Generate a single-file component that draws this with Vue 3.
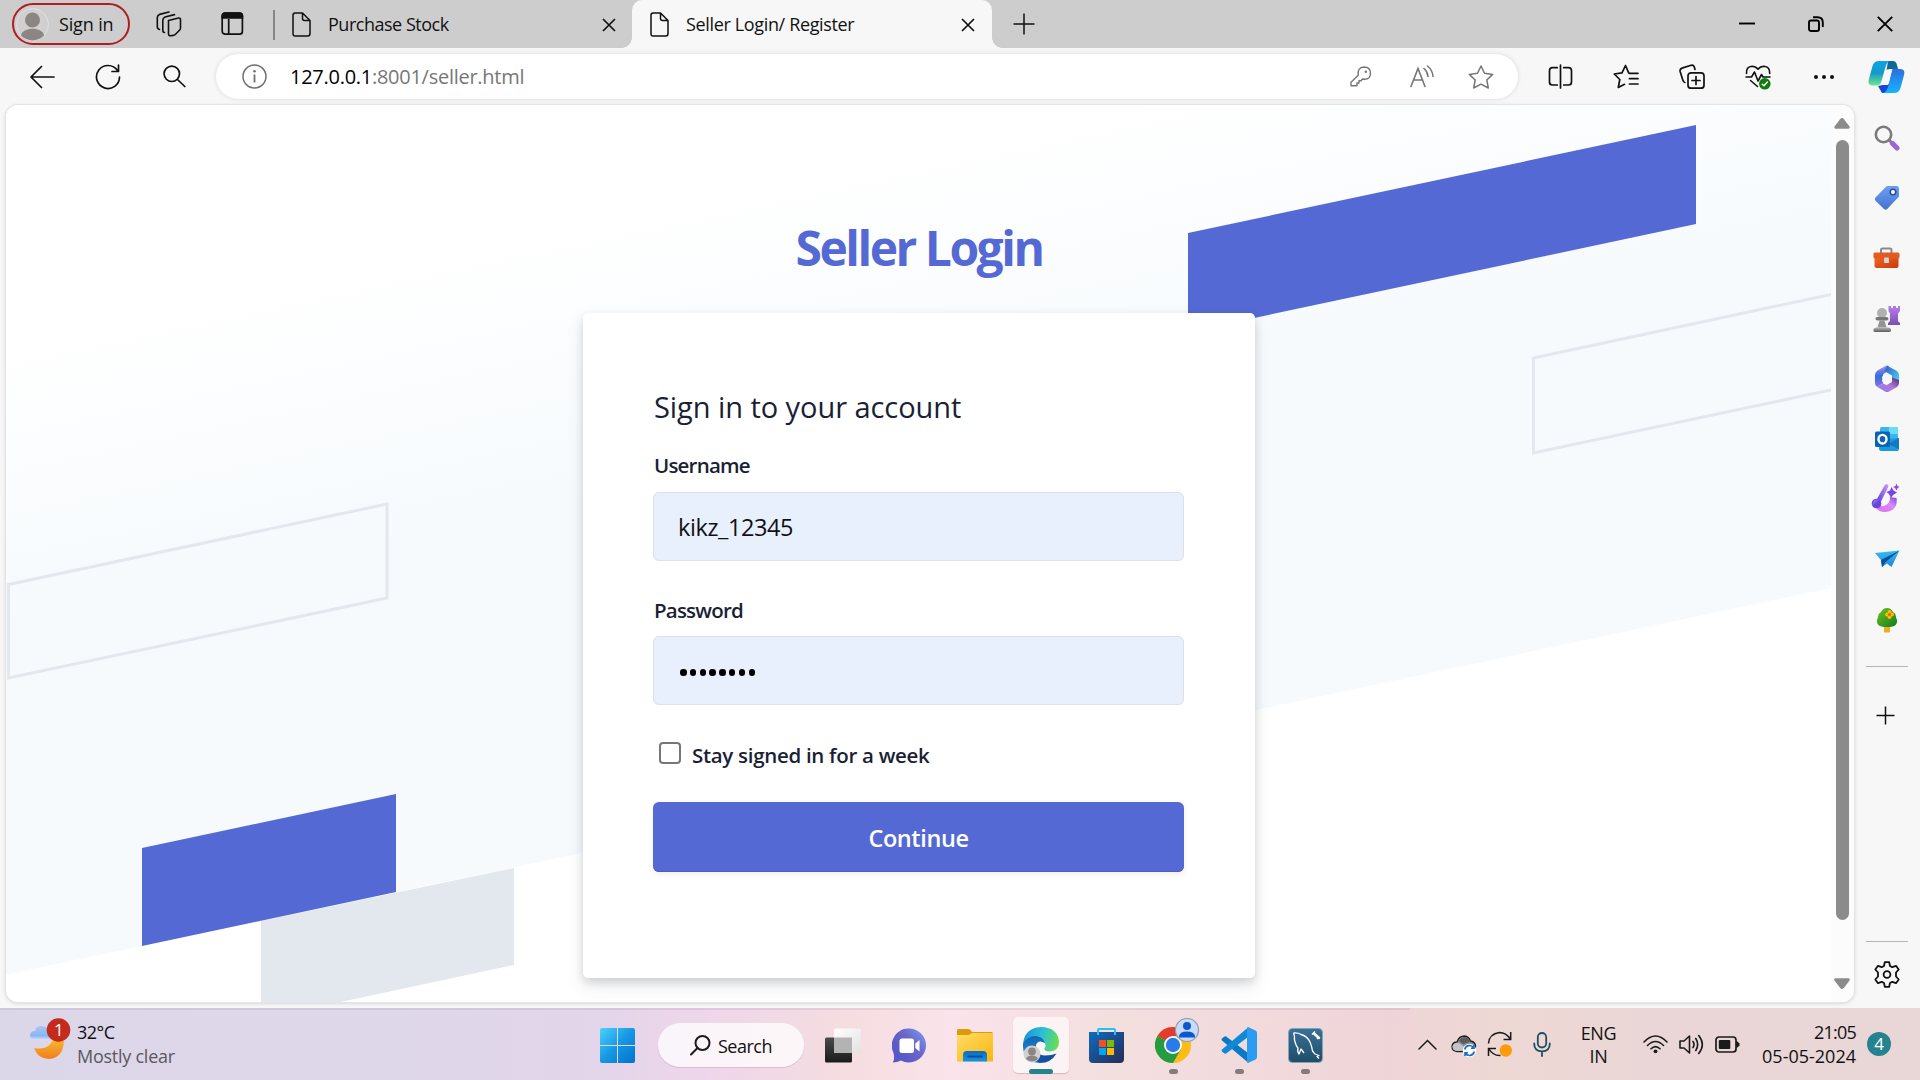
<script setup>
import { ref } from 'vue'

const username = ref('kikz_12345')
const password = ref('password')
const stay = ref(false)
</script>

<template>
  <div class="screen">
    <svg class="defs" width="0" height="0" aria-hidden="true">
      <defs>
        <linearGradient id="gCop1" x1="0" y1="0" x2="0" y2="1"><stop offset="0" stop-color="#0ba5e6" /><stop offset=".5" stop-color="#1499c9" /><stop offset="1" stop-color="#6fe58c" /></linearGradient>
        <linearGradient id="gCop2" x1="0" y1="0" x2="0" y2="1"><stop offset="0" stop-color="#2a6fe0" /><stop offset="1" stop-color="#16b4ff" /></linearGradient>
        <linearGradient id="gTag" x1="0" y1="0" x2="0" y2="1"><stop offset="0" stop-color="#6aa0f5" /><stop offset="1" stop-color="#4673cf" /></linearGradient>
        <linearGradient id="gBag" x1="0" y1="0" x2="1" y2="1"><stop offset="0" stop-color="#f0652a" /><stop offset="1" stop-color="#c93a06" /></linearGradient>
        <linearGradient id="gGray" x1="0" y1="0" x2="0" y2="1"><stop offset="0" stop-color="#b5b5b5" /><stop offset="1" stop-color="#5c5c5c" /></linearGradient>
        <linearGradient id="gRook" x1="0" y1="0" x2="0" y2="1"><stop offset="0" stop-color="#b77df0" /><stop offset="1" stop-color="#7c4fae" /></linearGradient>
        <linearGradient id="gM1" x1="0" y1="0" x2="0" y2="1"><stop offset="0" stop-color="#b48df0" /><stop offset=".5" stop-color="#2f6fd8" /><stop offset="1" stop-color="#8a6fe8" /></linearGradient>
        <linearGradient id="gM2" x1="0" y1="0" x2="1" y2="1"><stop offset="0" stop-color="#3059c8" /><stop offset="1" stop-color="#4adcf8" /></linearGradient>
        <linearGradient id="gM3" x1="0" y1="1" x2="1" y2="0"><stop offset="0" stop-color="#8b7cf0" /><stop offset=".5" stop-color="#b27ad8" /><stop offset="1" stop-color="#4b2c78" /></linearGradient>
        <linearGradient id="gMag" x1="0" y1="1" x2="1" y2="0"><stop offset="0" stop-color="#e06af5" /><stop offset=".6" stop-color="#d98af5" /><stop offset="1" stop-color="#7a4af0" /></linearGradient>
        <linearGradient id="gBrush" x1="0" y1="1" x2="1" y2="0"><stop offset="0" stop-color="#5b3fd8" /><stop offset="1" stop-color="#cf9af8" /></linearGradient>
        <linearGradient id="gTree" x1="0" y1="0" x2="1" y2="1"><stop offset="0" stop-color="#6cc520" /><stop offset="1" stop-color="#137a1a" /></linearGradient>
        <linearGradient id="gPlane" x1="0" y1="0" x2="0" y2="1"><stop offset="0" stop-color="#38bdf0" /><stop offset="1" stop-color="#1a86d8" /></linearGradient>
        <linearGradient id="gMoon" x1="0" y1="0" x2="0" y2="1"><stop offset="0" stop-color="#f9c02c" /><stop offset="1" stop-color="#f07d1e" /></linearGradient>
        <linearGradient id="gCloud" x1="0" y1="0" x2="0" y2="1"><stop offset="0" stop-color="#a6c8f8" /><stop offset=".7" stop-color="#8cb4f0" /><stop offset="1" stop-color="#d3e4fc" /></linearGradient>
        <linearGradient id="gWin" gradientUnits="userSpaceOnUse" x1="0" y1="0" x2="35" y2="35"><stop offset="0" stop-color="#4cd0fb" /><stop offset=".5" stop-color="#1698e2" /><stop offset="1" stop-color="#0072d0" /></linearGradient>
        <linearGradient id="gTvD" x1="0" y1="0" x2="0" y2="1"><stop offset="0" stop-color="#4a4a4a" /><stop offset="1" stop-color="#1b1b1b" /></linearGradient>
        <linearGradient id="gTvL" x1="0" y1="0" x2="1" y2="1"><stop offset="0" stop-color="#fff" /><stop offset="1" stop-color="#e2e2e2" /></linearGradient>
        <linearGradient id="gChat" x1="0" y1=".8" x2="1" y2="0"><stop offset=".1" stop-color="#5558c8" /><stop offset=".55" stop-color="#6c66c8" /><stop offset="1" stop-color="#78a0f8" /></linearGradient>
        <linearGradient id="gFold" x1="0" y1="0" x2="1" y2="1"><stop offset="0" stop-color="#ffdc68" /><stop offset="1" stop-color="#fbb60e" /></linearGradient>
        <linearGradient id="gFoldB" x1="0" y1="0" x2="0" y2="1"><stop offset="0" stop-color="#0f6cbd" /><stop offset="1" stop-color="#1593ea" /></linearGradient>
        <linearGradient id="gEdge1" x1="0" y1=".4" x2="1" y2=".6"><stop offset="0" stop-color="#1a94d8" /><stop offset=".5" stop-color="#2cc0d8" /><stop offset="1" stop-color="#6be04a" /></linearGradient>
        <linearGradient id="gEdge2" x1="0" y1="0" x2="0" y2="1"><stop offset="0" stop-color="#1464b0" /><stop offset="1" stop-color="#1a9ae8" /></linearGradient>
        <linearGradient id="gStore" x1="0" y1="0" x2="1" y2="1"><stop offset="0" stop-color="#0f6cbd" /><stop offset="1" stop-color="#262b58" /></linearGradient>
        <linearGradient id="gSql" x1="0" y1="0" x2="0" y2="1"><stop offset="0" stop-color="#3a7099" /><stop offset="1" stop-color="#1f4d66" /></linearGradient>
      </defs>
    </svg>

    <!-- Title bar -->
    <header class="tabs">
      <div class="profile">
        <svg width="33" height="33" viewBox="0 0 33 33"><circle cx="16.500" cy="16.500" r="16" fill="#d2d0ce" stroke="#e2e0de" /><circle cx="16.500" cy="12" r="7.500" fill="#8b8683" /><path d="M5 27.500C6 18.500 27 18.500 28 27.500A16 16 0 0 1 5 27.500Z" fill="#8b8683" /></svg>
        <span>Sign in</span>
      </div>
      <svg class="i-work" width="26" height="26" viewBox="0 0 26 26" fill="none" stroke="#111" stroke-width="1.600" stroke-linejoin="round" stroke-linecap="round"><path d="M12.500 9.500 22.500 7Q24.500 6.700 24.500 8.800V17Q24.500 18.300 23.500 19.300L19.500 23.200Q18.500 24.200 17 24.400L14.800 24.700Q12.500 25 12.500 22.500Z" /><path d="M8.500 21.500Q6.800 21.500 6.800 19V9.500Q6.800 7 9 6L18.500 3.600" /><path d="M3.500 18.500Q1.300 18 1.300 15.500V6.500Q1.300 4.300 3.500 3.400L13 1" /></svg>
      <svg class="i-tabact" width="23" height="24" viewBox="0 0 23 24" fill="none" stroke="#111" stroke-width="1.700"><rect x="1.200" y="1.200" width="20.200" height="21" rx="3" /><path d="M1.200 6V4Q1.200 1.200 4 1.200H18.500Q21.400 1.200 21.400 4V6Z" fill="#111" /><path d="M7.700 7V22" /></svg>
      <i class="vline"></i>
      <div class="tab">
        <svg width="19" height="25" viewBox="0 0 19 25" fill="none" stroke="#111" stroke-width="1.500" stroke-linejoin="round"><path d="M3 1H10.500L18 8.500V21.500Q18 24 15.800 24H3.200Q1 24 1 21.500V3.300Q1 1 3 1ZM10.500 1V6.500Q10.500 8.500 12.500 8.500H18" /></svg>
        <span class="t1">Purchase Stock</span>
        <svg class="x" width="14" height="14" viewBox="0 0 14 14" stroke="#111" stroke-width="1.700"><path d="M1 1 13 13M13 1 1 13" /></svg>
      </div>
      <div class="tab active">
        <svg width="19" height="25" viewBox="0 0 19 25" fill="none" stroke="#111" stroke-width="1.500" stroke-linejoin="round"><path d="M3 1H10.500L18 8.500V21.500Q18 24 15.800 24H3.200Q1 24 1 21.500V3.300Q1 1 3 1ZM10.500 1V6.500Q10.500 8.500 12.500 8.500H18" /></svg>
        <span class="t2">Seller Login/ Register</span>
        <svg class="x" width="14" height="14" viewBox="0 0 14 14" stroke="#111" stroke-width="1.700"><path d="M1 1 13 13M13 1 1 13" /></svg>
      </div>
      <svg class="newtab" width="22" height="22" viewBox="0 0 22 22" stroke="#111" stroke-width="1.500"><path d="M11 0.500V21.500M.500 11H21.500" /></svg>
      <div class="winctl">
        <svg width="16" height="16" viewBox="0 0 16 16" stroke="#000" stroke-width="1.900"><path d="M0 7.500H16" /></svg>
        <svg width="16" height="16" viewBox="0 0 16 16" fill="none" stroke="#000" stroke-width="1.900"><rect x="1" y="4.500" width="10" height="10.500" rx="2" /><path d="M5 1.200H9.500Q14.800 1.200 14.800 6.500V11" /></svg>
        <svg width="16" height="16" viewBox="0 0 16 16" stroke="#000" stroke-width="1.900"><path d="M.800 .800 15.200 15.200M15.200 .800 .800 15.200" /></svg>
      </div>
    </header>

    <!-- Toolbar -->
    <div class="toolbar">
      <svg class="b-back" width="25" height="24" viewBox="0 0 25 24" fill="none" stroke="#111" stroke-width="1.700" stroke-linecap="round" stroke-linejoin="round"><path d="M24 12H1.500M11.500 1.500 1 12 11.500 22.500" /></svg>
      <svg class="b-ref" width="26" height="26" viewBox="0 0 26 26" fill="none" stroke="#111" stroke-width="1.700" stroke-linecap="round" stroke-linejoin="round"><path d="M24.500 13A11.500 11.500 0 1 1 22.500 6.500M23.500 1.200V7.500H17" /></svg>
      <svg class="b-search" width="23" height="23" viewBox="0 0 23 23" fill="none" stroke="#111" stroke-width="1.700" stroke-linecap="round"><circle cx="8.800" cy="8.800" r="7.700" /><path d="M14.500 14.500 21.800 21.500" /></svg>
      <div class="address">
        <svg class="info" width="25" height="25" viewBox="0 0 25 25" fill="none" stroke="#707070" stroke-width="1.500"><circle cx="12.500" cy="12.500" r="11.500" /><path d="M12.500 10.500V18.500" stroke-width="1.800" /><circle cx="12.500" cy="7.300" r="1.300" fill="#707070" stroke="none" /></svg>
        <span class="url"><b>127.0.0.1</b>:8001/seller.html</span>
        <svg class="key" width="22" height="21" viewBox="0 0 22 21" fill="none" stroke="#767676" stroke-width="1.400" stroke-linejoin="round"><path d="M14 1Q20.500 1 20.500 7.200 20.500 13 14.500 13.300L12.500 13 11 14.800H9V17H7V19.800H1V16.300L8.300 9.200Q7 1.500 14 1Z" /><circle cx="15.800" cy="5.700" r="1.200" fill="#767676" stroke="none" /></svg>
        <svg class="read" width="24" height="23" viewBox="0 0 24 23" fill="none" stroke="#767676" stroke-width="1.600" stroke-linecap="round"><path d="M1 21.500 8 3.500 15 21.500M3.800 15H12.200M14 3.500Q17.500 6.500 18 11.500M17.500 1Q22.500 5 23 11.500" /></svg>
        <svg class="star" width="26" height="24" viewBox="0 0 26 24" fill="none" stroke="#767676" stroke-width="1.500" stroke-linejoin="round"><path d="M13 1 16.500 8.300 24.700 9.400 18.800 15 20.300 23 13 19.200 5.700 23 7.200 15 1.300 9.400 9.500 8.300Z" /></svg>
      </div>
      <div class="tools">
        <span><svg width="25" height="25" viewBox="0 0 25 25" fill="none" stroke="#111" stroke-width="1.700" stroke-linecap="round"><path d="M12.500 1V24M9.300 3.700H4.500Q1.500 3.700 1.500 6.700V18Q1.500 21 4.500 21H9.300M15.700 3.700H20.500Q23.500 3.700 23.500 6.700V18Q23.500 21 20.500 21H15.700" /></svg></span>
        <span><svg width="26" height="25" viewBox="0 0 26 25" fill="none" stroke="#111" stroke-width="1.700" stroke-linecap="round" stroke-linejoin="round"><path d="M17 9.300 15.800 9.100 12.500 1.500 9 8.800 1.300 10 6.800 15.500 5.300 23.500 11.500 20.300M16.500 9.300H25M16.500 14.700H25M16.500 20H25" /></svg></span>
        <span><svg width="26" height="25" viewBox="0 0 26 25" fill="none" stroke="#111" stroke-width="1.700" stroke-linejoin="round" stroke-linecap="round"><rect x="9" y="8.800" width="16" height="15.400" rx="3" /><path d="M17 12.500V20.500M13 16.500H21M5.800 18.500Q4.500 18.300 3.800 16L1.200 7.700Q.500 5 3 4.100L12 1.300Q14.500 .700 15.300 3L16 5.500" /></svg></span>
        <span><svg width="26" height="26" viewBox="0 0 26 26" fill="none" stroke="#111" stroke-width="1.600" stroke-linejoin="round" stroke-linecap="round"><path d="M1.500 9.500Q1 2.500 7 2.200 10.500 2.200 13 5.200 15.500 2.200 19 2.200 25 2.500 24.700 9.500M1 13H6.500L9.500 8 13 17 16.500 10.500 18 13H25M5.500 16.500 12.500 22.500" /><circle cx="19.800" cy="19.800" r="5.800" fill="#107c10" stroke="none" /><path d="M17.200 20.200 19 21.800 22.300 18" stroke="#fff" stroke-width="1.400" /></svg></span>
        <span><svg width="22" height="6" viewBox="0 0 22 6" fill="#111"><circle cx="3" cy="3" r="2" /><circle cx="11" cy="3" r="2" /><circle cx="19" cy="3" r="2" /></svg></span>
      </div>
      <svg class="copilot" width="37" height="34" viewBox="0 0 37 34"><path d="M10 26 14 33H23Q26 33 27.500 28L29 22Z" fill="#1546d8" /><path d="M20 1H25Q28 1 29 5L30 9H22L18 14Z" fill="#0f6896" /><path d="M11 1H22Q19 1.500 17.500 7L13.500 21Q12.500 25.500 8.500 25.500H4.500Q-.500 25.500 .800 19.500L4.500 6Q6 1 11 1Z" fill="url(#gCop1)" /><path d="M24 9H32.500Q37.500 9.500 36 15L32.500 28Q31 33 26 33H15Q18.500 32 20 27Z" fill="url(#gCop2)" /><path d="M22 9H24.500L20 25H13L14.500 21 17.500 11Q18.500 9 22 9Z" fill="#f7f7f7" /></svg>
    </div>

    <!-- Content -->
    <div class="middle">
      <main class="page">
        <svg class="bg" width="1826" height="898" viewBox="5 105 1826 898">
          <defs><linearGradient id="gBg" gradientUnits="userSpaceOnUse" x1="0" y1="345" x2="57" y2="613"><stop offset="0" stop-color="#fff" /><stop offset="1" stop-color="#f6fafd" /></linearGradient></defs>
          <path d="M5 105H1831V588L5 975Z" fill="url(#gBg)" />
          <path d="M1188 233 1696 125V224L1188 332Z" fill="#5469d4" />
          <path d="M387 504 8.500 584.500V678L387 598ZM1840 292.500 1533.500 358V453L1840 388" fill="none" stroke="#e3e8ee" stroke-width="3" />
          <path d="M261 921 514 868V965L261 1019Z" fill="#e3e8ee" />
          <path d="M142 848 396 794V892L142 946Z" fill="#5469d4" />
        </svg>
        <div class="content">
          <h1>Seller Login</h1>
          <form class="card" @submit.prevent>
            <h2>Sign in to your account</h2>
            <label class="lab" for="user">Username</label>
            <input id="user" v-model="username" class="field" type="text">
            <label class="lab second" for="pass">Password</label>
            <div class="field pw"><i v-for="n in password.length" :key="n"></i></div>
            <div class="check">
              <span class="box" @click="stay = !stay"></span>
              <span class="staytext">Stay signed in for a week</span>
            </div>
            <button class="go">Continue</button>
          </form>
        </div>
        <div class="scroll">
          <svg width="16" height="11" viewBox="0 0 16 11" fill="#8b8b8b"><path d="M8 0Q9 0 9.800 1L15.500 8.500Q16.200 10.500 14.500 10.700H1.500Q-.200 10.500 .500 8.500L6.200 1Q7 0 8 0Z" /></svg>
          <i class="thumb"></i>
          <svg class="down" width="16" height="11" viewBox="0 0 16 11" fill="#8b8b8b"><path d="M8 11Q9 11 9.800 10L15.500 2.500Q16.200 .500 14.500 .300H1.500Q-.200 .500 .500 2.500L6.200 10Q7 11 8 11Z" /></svg>
        </div>
      </main>

      <aside class="side">
        <span><svg width="26" height="26" viewBox="0 0 26 26" fill="none"><path d="M15 15 19 19" stroke="#777" stroke-width="2.500" /><path d="M18.300 18.300 23 23" stroke="#9c66d8" stroke-width="5" stroke-linecap="round" /><circle cx="9.500" cy="9.500" r="7.700" stroke="#7b7b7b" stroke-width="2.600" /></svg></span>
        <span><svg width="26" height="26" viewBox="0 0 26 26"><path d="M14 1H22.500Q25 1 25 3.500V11.500L13.200 24Q11.700 25.500 10 24L1.500 15.700Q0 14 1.500 12.500L12 1.800Q13 1 14 1Z" fill="url(#gTag)" /><circle cx="19" cy="7" r="2.800" fill="#fff" stroke="#2c4d9b" stroke-width="1.600" /></svg></span>
        <span><svg width="27" height="22" viewBox="0 0 27 22"><path d="M8 6V3Q8 1.500 9.500 1.500H17Q18.500 1.500 18.500 3V6" fill="none" stroke="#8a8a8a" stroke-width="2" /><path d="M1.500 10H25.500V19Q25.500 21 23.500 21H3.500Q1.500 21 1.500 19Z" fill="url(#gBag)" /><path d="M1.500 5.500H25Q26.500 5.500 26.500 7V10Q26.500 11.500 25 11.500H2Q.500 11.500 .500 10V7Q.500 5.500 1.500 5.500Z" fill="#e25a20" /><rect x="11" y="10.500" width="5" height="5.500" rx="1" fill="#d5d5d5" /></svg></span>
        <span><svg width="27" height="28" viewBox="0 0 27 28"><path d="M15.500 1H18V3H20V1H23V3H25V1H27V6L25 8.500V16L27 18V20H15V18L17 16V8.500L15.500 6Z" fill="url(#gRook)" /><circle cx="9" cy="8" r="5" fill="#b0b0b0" /><rect x="2.500" y="12" width="13" height="3.500" rx="1.700" fill="#777" /><path d="M6.500 15.500H11.500L13.500 22.500H4.500Z" fill="#949494" /><path d="M3 22.500H15Q18 22.500 18 25V25.500Q18 27 16 27H2Q0 27 .300 25 .500 22.500 3 22.500Z" fill="url(#gGray)" /></svg></span>
        <span><svg width="26" height="28" viewBox="0 0 26 28"><path d="M10.500 1.500 3.500 5.500Q1 7 1 10V18Q1 20.500 3 21.700L9 18.500V9.500L15 5V1Q13 0 10.500 1.500Z" fill="url(#gM1)" /><path d="M13 .700 22.500 5.800Q25 7.500 25 10V18L18 14.500V10.500L10 6Z" fill="url(#gM2)" /><path d="M25 15V18Q25 20.700 23 22L15 26.500Q13 27.500 11 26.500L3 21.700 9 18.500 12.500 20 18 17V12.500Z" fill="url(#gM3)" /><path d="M13 8.500 17.800 11.300V16.700L13 19.500 8.200 16.700V11.300Z" fill="#f7f7f7" /></svg></span>
        <span><svg width="26" height="26" viewBox="0 0 26 26"><rect x="6" y="1" width="18" height="20" rx="1.500" fill="#38b7ee" /><path d="M15 1H24V8H15Z" fill="#6bdcf8" /><path d="M6 13 25 12V23Q25 25 23 25H7Q5 25 5 23Z" fill="#1a9be0" /><path d="M14 18 25 12V23Z" fill="#1479bd" /><rect x="1" y="5.500" width="15" height="15.500" rx="1.500" fill="#0a63b5" /><ellipse cx="8.500" cy="13.200" rx="4" ry="4.300" fill="none" stroke="#fff" stroke-width="2.400" /></svg></span>
        <span><svg class="magic" width="29" height="30" viewBox="0 0 29 30"><path d="M7.500 20Q10 25 15 22 19.500 19 19 14L25.500 15Q27 25 19 28 9 31 4.500 24Z" fill="url(#gMag)" /><path d="M6 16 13.500 2.500Q15 .500 16.700 1.500 18 2.500 17.200 4L10 18.500Z" fill="url(#gBrush)" /><circle cx="5.500" cy="20.500" r="4.800" fill="#6a45dc" /><path d="M1 23 3 17 9 16Z" fill="#8a5ff0" /><path d="M20.500 4 22.500 7.500 26 9.500 22 12 20 15 18 11 15.500 9 19 7.500Z" fill="#7742e8" /><path d="M25.500 .500 26.500 3 28.500 4 26.500 5.300 25.500 7.500 24 5 22 4 24.500 3Z" fill="#8a4af0" /></svg></span>
        <span><svg width="26" height="18" viewBox="0 0 26 18"><path d="M1 3 25.500 .500 17.500 17 13 13.500 8 17 7 10Z" fill="url(#gPlane)" /><path d="M25.500 .500 7 10 8 17 11 12.500Z" fill="#0d4f94" /></svg></span>
        <span><svg width="22" height="26" viewBox="0 0 22 26"><rect x="8" y="17" width="6" height="8.500" rx="1" fill="#f0ae1a" /><path d="M11 1Q15 1 17 5 20.500 7 20 10.500 22.500 15 19.500 18 17.500 20 11 20 4.500 20 2.500 18-.500 15 2 10.500 1.500 7 5 5 7 1 11 1Z" fill="url(#gTree)" /><g fill="#ffb900"><circle cx="13.500" cy="5" r="2" /><circle cx="13.500" cy="10" r="2" /><circle cx="11" cy="7.500" r="2" /><circle cx="16" cy="7.500" r="2" /></g><circle cx="13.500" cy="7.500" r="1.500" fill="#e8541a" /></svg></span>
        <i class="hline"></i>
        <svg class="add" width="19" height="19" viewBox="0 0 19 19" stroke="#111" stroke-width="1.500"><path d="M9.500 .500V18.500M.500 9.500H18.500" /></svg>
        <i class="hline low"></i>
        <svg class="gear" width="26" height="27" viewBox="0 0 26 27" fill="none" stroke="#111" stroke-width="1.800" stroke-linejoin="round"><path d="M10.800 1.200H15.200L16 5 18.300 6.200 22 4.800 24.700 8.500 22 11.500V15.500L24.700 18.500 22 22.200 18.300 20.800 16 22 15.200 25.800H10.800L10 22 7.700 20.800 4 22.200 1.300 18.500 4 15.500V11.500L1.300 8.500 4 4.800 7.700 6.200 10 5Z" /><circle cx="13" cy="13.500" r="3.400" /></svg>
      </aside>
    </div>

    <!-- Taskbar -->
    <footer class="task">
      <div class="weather">
        <svg width="41" height="44" viewBox="0 0 41 44"><path d="M34 23Q33 40 19 41 8 41 4 30 20 33 24 19Z" fill="url(#gMoon)" /><path d="M6 22Q0 22 0 17 1 12.500 5 13 6 8 11.500 8 16 8 18 12H22V22Z" fill="url(#gCloud)" /><circle cx="28.500" cy="12" r="11.800" fill="#c42b1c" /><text x="28.800" y="18.300" text-anchor="middle" fill="#fff" font-size="17">1</text></svg>
        <div class="wtext"><span>32°C</span><span class="sub">Mostly clear</span></div>
      </div>
      <svg class="start" width="35" height="35" viewBox="0 0 35 35" fill="url(#gWin)"><path d="M2 0H17V17H0V2Q0 0 2 0Z" /><path d="M18 0H33Q35 0 35 2V17H18Z" /><path d="M0 18H17V35H2Q0 35 0 33Z" /><path d="M18 18H35V33Q35 35 33 35H18Z" /></svg>
      <div class="tsearch">
        <svg width="21" height="21" viewBox="0 0 21 21" fill="none" stroke="#1b1b1b" stroke-width="2"><circle cx="12.500" cy="8" r="7" /><path d="M7.500 13 1 19.500" stroke-linecap="round" /></svg>
        <span>Search</span>
      </div>
      <nav class="apps">
        <span><svg width="36" height="35" viewBox="0 0 36 35"><rect x="0" y="9.500" width="27" height="25" rx="1.500" fill="url(#gTvD)" /><rect x="9" y="0.500" width="27" height="24.500" rx="1.500" fill="url(#gTvL)" /><rect x="9" y="9.500" width="18" height="15.500" fill="#b3b3b3" /></svg></span>
        <span><svg width="35" height="35" viewBox="0 0 35 35"><path d="M17.500 0.500A17 17 0 1 1 9 32.500Q5 34.500 .800 34.500 3 31 1.500 25A17 17 0 0 1 17.500 .500Z" fill="url(#gChat)" /><rect x="7.500" y="10.500" width="14.500" height="14.500" rx="2.500" fill="#fff" /><path d="M23.300 15.500 27.500 12V23.500L23.300 20Z" fill="#fff" /></svg></span>
        <span><svg width="36" height="34" viewBox="0 0 36 34"><path d="M0 2.500Q0 1 1.500 1H11Q12.500 1 13.500 2L15 4H34.500Q36 4 36 5.500V12H0Z" fill="#dc9b08" /><path d="M0 7H11Q12.500 7 13.500 6L15 5H36V33.500H0Z" fill="url(#gFold)" /><path d="M6 33.500V27Q6 23 10 23H26Q30 23 30 27V33.500Z" fill="url(#gFoldB)" /><path d="M11 28.500H25" stroke="#0c4f98" stroke-width="2" stroke-linecap="round" /></svg></span>
        <span class="on"><svg width="36" height="36" viewBox="0 0 36 36"><path d="M0 18Q1 1 18 0 35 .500 36 15 36 24 26.500 24.500 21 24.500 21.500 21.500 24 18 21 15 12 7 0 18Z" fill="url(#gEdge1)" /><path d="M0 17Q4 9 12.500 9 20 9.500 22 16 15 12 13 18 12 27 19 30 25 33 16 36 1 35 0 20Z" fill="url(#gEdge2)" /><path d="M13 18Q12 28 22 28.500 29 28.500 33.500 26.500 28 36 17 36 9 33 9.500 26 10 20 13 18Z" fill="#154f9f" /><circle cx="9" cy="27" r="8.500" fill="#d2d0ce" /><circle cx="9" cy="24.500" r="3.900" fill="#8b8683" /><path d="M3 32Q4 28.500 9 28.500T15 32A8.500 8.500 0 0 1 3 32Z" fill="#8b8683" /></svg><i class="bar"></i></span>
        <span><svg class="store" width="35" height="35" viewBox="0 0 35 35"><path d="M9 6V2Q9 1 10 1H25Q26 1 26 2V6" fill="none" stroke="#25c3f4" stroke-width="2" /><path d="M0 4H35V31Q35 35 31 35H4Q0 35 0 31Z" fill="url(#gStore)" /><path d="M10 12H17V19H10Z" fill="#f25022" /><path d="M18 12H25V19H18Z" fill="#7fba00" /><path d="M10 20H17V27H10Z" fill="#00a4ef" /><path d="M18 20H25V27H18Z" fill="#ffb900" /><path d="M9 7V4M26 7V4" stroke="#25c3f4" stroke-width="2" /></svg></span>
        <span><svg class="chrome" width="45" height="45" viewBox="0 0 45 45"><circle cx="18" cy="27" r="18" fill="#fbbc14" /><path d="M18 27 2.400 18A18 18 0 0 1 33.600 18H18Z" fill="#e33b2e" /><path d="M18 27 2.400 18A18 18 0 0 0 18 45L25.800 31.500Z" fill="#259c41" /><circle cx="18" cy="27" r="9" fill="#fff" /><circle cx="18" cy="27" r="7.200" fill="#2a7bea" /><circle cx="32" cy="12" r="11.500" fill="#c8dcfa" stroke="#8f9cb4" stroke-width="1.200" /><circle cx="32" cy="8" r="4" fill="#0b57d0" /><path d="M24 18.500Q24.500 13.500 32 13.500T40 18.500V19.500H24Z" fill="#0b57d0" /></svg><i class="dot"></i></span>
        <span><svg width="36" height="36" viewBox="0 0 36 36"><path d="M1 11.500 3.500 9.500Q4.500 9 5.500 9.700L27 26V35.500L1 13.500Q0 12.500 1 11.500Z" fill="#0a78c4" /><path d="M1 24.500 3.500 26.500Q4.500 27 5.500 26.300L27 10V.500L1 22.500Q0 23.500 1 24.500Z" fill="#1089d6" /><path d="M27 0 34.500 3.500Q36 4.300 36 6V30Q36 31.700 34.500 32.500L27 36Q26 36 26 34V2Q26 0 27 0Z" fill="#2a9df0" /></svg><i class="dot"></i></span>
        <span><svg width="35" height="35" viewBox="0 0 35 35"><rect x=".5" y=".5" width="34" height="34" rx="4" fill="url(#gSql)" stroke="#7fa5bd" /><path d="M5.500 5Q10 4.500 13 6.500 19 8 22 14 24 19 24.500 23L27 26 31 27.500 29 28.500 31 30.500M5.500 5Q7 8 6.500 12 8 18 10 20 9 24 11 26L13 21 16 25" fill="none" stroke="#fff" stroke-width="1.300" stroke-linejoin="round" /><path d="M26 5.500 31 10" stroke="#fff" stroke-width="2.500" stroke-linecap="round" /><path d="M24 6.500 27 3.500M31 8.500 29 11" stroke="#fff" stroke-width="1.500" /></svg><i class="dot"></i></span>
      </nav>
      <div class="tray">
        <svg class="caret" width="19" height="11" viewBox="0 0 19 11" fill="none" stroke="#1b1b1b" stroke-width="1.500" stroke-linecap="round"><path d="M1 10 9.500 1.500 18 10" /></svg>
        <svg class="cloud" width="26" height="24" viewBox="0 0 26 24"><path d="M6 17.500Q1 17 1 12.500 1.500 8 6 8 8 2 13.500 2 18 2.500 19.500 7 25 8 24.500 13 24 17.500 19 17.500Z" fill="#8d8d8d" stroke="#222" stroke-width="1.300" /><path d="M6 17Q1.500 16.500 1.500 12.500 3 8 8 9L18 16.500Z" fill="#c5c5c5" /><path d="M8 7Q12 1 17 4.500L19 8 12 10Z" fill="#5b5b5b" /><circle cx="18.500" cy="16.500" r="6.800" fill="#fff" /><path d="M13.700 15.500A5 5 0 0 1 22.700 13.700M23.300 17.500A5 5 0 0 1 14.300 19.300M23 11V14.200H20M14 22V18.800H17" fill="none" stroke="#1570c8" stroke-width="1.600" /></svg>
        <svg class="sync" width="26" height="26" viewBox="0 0 26 26" fill="none" stroke="#1b1b1b" stroke-width="1.500"><path d="M1.500 12.500Q2 3 12.500 1.500 19 1.500 23.300 8M23.700 1V8.500H16.500M1.500 25V17.500H9M2 18Q6 25 13.500 24.500" /><circle cx="18.800" cy="19.500" r="6.200" fill="#ff9a0a" stroke="none" /></svg>
        <svg class="mic" width="18" height="25" viewBox="0 0 18 25" fill="none" stroke="#1f4f63" stroke-width="1.800" stroke-linecap="round"><rect x="4.800" y="1" width="8.400" height="14.500" rx="4.200" /><path d="M1.200 11.500Q1.200 19.300 9 19.300T16.800 11.500M9 19.300V24" /></svg>
        <div class="lang"><span>ENG</span><span>IN</span></div>
        <svg class="wifi" width="25" height="19" viewBox="0 0 25 19" fill="none" stroke="#1b1b1b" stroke-width="1.600" stroke-linecap="round"><path d="M1 7Q12.500-5 24 7M4.500 10.500Q12.500 2.500 20.500 10.500M8 13.800Q12.500 9.300 17 13.800" /><circle cx="12.500" cy="16.300" r="1.900" fill="#1b1b1b" stroke="none" /></svg>
        <svg class="vol" width="25" height="21" viewBox="0 0 25 21" fill="none" stroke="#1b1b1b" stroke-width="1.600" stroke-linejoin="round" stroke-linecap="round"><path d="M1 7V14H5L10.500 19V2L5 7ZM14 7.500Q16 10.500 14 13.500M16.800 4.500Q20.500 10.500 16.800 16.500M19.700 1.500Q27 10.500 19.700 19.500" /></svg>
        <svg class="bat" width="25" height="17" viewBox="0 0 25 17" fill="none" stroke="#1b1b1b" stroke-width="1.700"><rect x="1" y="1" width="20" height="15" rx="3" /><rect x="3.800" y="4" width="11.500" height="9" rx="1" fill="#1b1b1b" stroke="none" /><path d="M21 5.500H22.500L24.500 7.500V9.500L22.500 11.500H21Z" fill="#1b1b1b" stroke="none" /></svg>
        <div class="clock"><span class="time">21:05</span><span>05-05-2024</span></div>
        <span class="count">4</span>
      </div>
    </footer>
  </div>
</template>

<style>
body { margin: 0; overflow: hidden; }
</style>

<style scoped>
* { box-sizing: border-box; }
.screen { width: 1920px; height: 1080px; display: flex; flex-direction: column; overflow: hidden; background: #f7f7f7; font-family: "Open Sans", "Noto Sans", sans-serif; font-size: 18px; color: #111; font-style: normal; }
.screen svg { flex: none; display: block; }
.defs { position: absolute; }

.tabs { height: 48px; flex: none; display: flex; align-items: center; background: #cdcdcd; }
.profile { width: 118px; height: 42px; margin-left: 12px; border: 2px solid #b01c22; border-radius: 21px; display: flex; align-items: center; padding-left: 2px; gap: 10px; white-space: nowrap; letter-spacing: -.15px; }
.i-work { margin-left: 26px; }
.i-tabact { margin-left: 39px; }
.vline { width: 2px; height: 30px; background: #858585; margin-left: 29px; margin-top: 2px; }
.tab { width: 357px; height: 48px; display: flex; align-items: center; padding-left: 17px; white-space: nowrap; }
.tab span { margin-left: 17px; margin-top: -1px; }
.tab .x { margin-left: auto; margin-right: 16px; margin-top: 1px; }
.t1 { letter-spacing: -.48px; }
.t2 { letter-spacing: -.35px; }
.tab.active { width: 360px; background: #f7f7f7; border-radius: 10px 10px 0 0; position: relative; padding-left: 18px; }
.tab.active .x { margin-right: 17px; }
.tab.active::before, .tab.active::after { content: ""; position: absolute; bottom: 0; width: 10px; height: 10px; }
.tab.active::before { left: -10px; background: radial-gradient(circle at 0 0, transparent 9.500px, #f7f7f7 10px); }
.tab.active::after { right: -10px; background: radial-gradient(circle at 100% 0, transparent 9.500px, #f7f7f7 10px); }
.newtab { margin-left: 21px; margin-top: -1px; }
.winctl { margin-left: auto; display: flex; gap: 53px; margin-right: 27px; }

.toolbar { height: 57px; flex: none; display: flex; align-items: center; }
.b-back { margin-left: 30px; }
.b-ref { margin-left: 40px; }
.b-search { margin-left: 42px; }
.address { width: 1302px; height: 45px; margin-left: 30px; background: #fff; border-radius: 23px; box-shadow: 0 0 5px rgba(0, 0, 0, .12); display: flex; align-items: center; }
.info { margin-left: 26px; }
.url { font-size: 20px; letter-spacing: -.27px; margin-left: 23px; color: #777; }
.url b { font-weight: 400; color: #000; }
.key { margin-left: auto; }
.read { margin-left: 38px; }
.star { margin-left: 34px; margin-right: 24px; }
.tools { display: flex; margin-left: 9px; }
.tools span { width: 66px; display: flex; justify-content: center; align-items: center; }
.copilot { margin-left: 11px; }

.middle { flex: 1; display: flex; min-height: 0; }
.page { width: 1848px; height: 897px; margin-left: 6px; background: #fff; border-radius: 12px; overflow: hidden; position: relative; display: flex; box-shadow: 0 0 0 1px #e4e4e4, 0 1px 4px rgba(0, 0, 0, .18); }
.bg { position: absolute; left: -1px; top: 0; }
.content { width: 1825px; padding-left: 1px; position: relative; display: flex; flex-direction: column; align-items: center; }
h1 { margin: 108px 0 0; height: 70px; line-height: 70px; font-size: 48px; font-weight: 700; letter-spacing: -2.500px; color: #5469d4; }
.card { width: 672px; height: 665px; margin-top: 30px; flex: none; background: #fff; border-radius: 5px; padding: 76px 71px 0 70px; box-shadow: 0 8px 17px rgba(60, 66, 87, .12), 0 4px 8px rgba(0, 0, 0, .12); display: flex; flex-direction: column; }
h2 { margin: 0; padding-left: 1px; height: 36px; line-height: 36px; font-size: 29px; font-weight: 400; letter-spacing: -.06px; color: #1a1f36; }
.lab { margin-top: 27px; height: 26px; line-height: 26px; padding-left: 1px; font-size: 20.500px; font-weight: 600; letter-spacing: -.8px; color: #1a1f36; }
.lab.second { margin-top: 36px; }
.field { margin-top: 14px; width: 531px; height: 69px; flex: none; border: 1px solid #dcdfe6; border-radius: 6px; background: #e8effd; padding: 1px 24px 0; font: 400 23.500px "Open Sans", "Noto Sans", sans-serif; letter-spacing: -.4px; color: #111; outline: 0; }
.pw { display: flex; align-items: center; gap: 3.300px; margin-top: 13px; padding-top: 4px; padding-left: 26px; }
.pw i { width: 6.500px; height: 6.500px; border-radius: 50%; background: #000; }
.check { display: flex; height: 26px; margin-top: 37px; padding-left: 6px; color: #1a1f36; font-size: 20.500px; font-weight: 600; line-height: 26px; }
.box { width: 22px; height: 22px; border: 2px solid #767676; border-radius: 4px; background: #fff; }
.staytext { margin-left: 11px; letter-spacing: -.3px; }
.go { width: 531px; height: 70px; margin-top: 34px; border: 0; border-radius: 6px; background: #5469d4; color: #fff; font: 600 23.500px "Open Sans", "Noto Sans", sans-serif; letter-spacing: -.4px; padding: 2px 0 0; box-shadow: inset 0 -1px 0 #4b5ec2, 0 3px 6px rgba(60, 66, 87, .08); }
.scroll { width: 23px; position: relative; background: #fcfcfc; display: flex; flex-direction: column; align-items: center; padding: 13px 1px 13px 0; }
.thumb { width: 13px; height: 780px; border-radius: 7px; background: #8b8b8b; margin-top: 11px; }
.down { margin-top: auto; }

.side { flex: 1; display: flex; flex-direction: column; align-items: center; padding: 3px 1px 0 0; }
.side span { height: 60.200px; display: flex; align-items: center; justify-content: center; }
.magic { margin-right: 2px; margin-top: -2px; }
.hline { width: 42px; height: 1px; background: #b5b5b5; margin-top: 16px; }
.add { margin-top: 39px; margin-right: 2px; }
.hline.low { margin-top: 216px; }
.gear { margin-top: 19px; }

.task { height: 72px; flex: none; position: relative; display: flex; align-items: center; background: linear-gradient(90deg, #dcd7e8 0, #ded7e9 400px, #e3d5ea 600px, #efd6ea 710px, #f5dde0 850px, #fae3ea 950px, #f4dfdf 1110px, #f1d9dc 1280px, #efd4d7 1390px, #edd8d4 1500px, #ead6d6 1650px, #e9d6d6 1920px); }
.task::before { content: ""; position: absolute; left: 0; top: 0; width: 1410px; height: 2px; background: rgba(100, 60, 110, .1); }
.weather { display: flex; margin-left: 30px; width: 570px; margin-top: -3px; }
.wtext { display: flex; flex-direction: column; margin-left: 6px; line-height: 24px; margin-top: 2px; }
.wtext .sub { color: #5a5860; letter-spacing: -.25px; }
.wtext span { letter-spacing: -.5px; }
.start { margin-top: 3px; }
.tsearch { width: 146px; height: 44px; margin-left: 23px; margin-top: 2px; border-radius: 22px; background: rgba(255, 255, 255, .75); box-shadow: 0 1px 1px rgba(120, 60, 120, .18); display: flex; align-items: center; padding-left: 32px; letter-spacing: -.5px; }
.tsearch span { margin-left: 7px; margin-top: 1px; }
.apps { display: flex; height: 72px; margin-left: 6px; }
.apps span { width: 66px; height: 72px; display: flex; align-items: center; justify-content: center; position: relative; padding-top: 2px; }
.apps svg { position: relative; }
.store { margin-right: 1px; }
.on::before { content: ""; position: absolute; left: 5px; top: 9px; width: 56px; height: 56px; border-radius: 5px; background: rgba(255, 255, 255, .62); box-shadow: 0 1px 1px rgba(120, 60, 80, .25); }
.bar, .dot { position: absolute; top: 61px; height: 5px; border-radius: 3px; }
.bar { left: 21px; width: 24px; background: #25838f; }
.dot { left: 28.500px; width: 9px; background: #857a7c; }
.chrome { margin-left: 9px; margin-top: -9px; }
.tray { display: flex; align-items: center; margin-left: 80px; height: 72px; }
.cloud { margin-left: 14px; margin-top: 3px; }
.sync { margin-left: 10px; }
.mic { margin-left: 20px; }
.lang { display: flex; flex-direction: column; align-items: center; line-height: 23px; margin-left: 30px; width: 35px; letter-spacing: -.3px; margin-top: 1px; }
.wifi { margin-left: 27px; }
.vol { margin-left: 11px; }
.bat { margin-left: 11px; }
.clock { width: 104px; margin-left: 12px; display: flex; flex-direction: column; align-items: flex-end; line-height: 24px; }
.clock .time { letter-spacing: -.8px; }
.count { margin-left: 11px; width: 24px; height: 24px; border-radius: 50%; background: #25838f; color: #fff; text-align: center; line-height: 24px; font-size: 17px; }
</style>
